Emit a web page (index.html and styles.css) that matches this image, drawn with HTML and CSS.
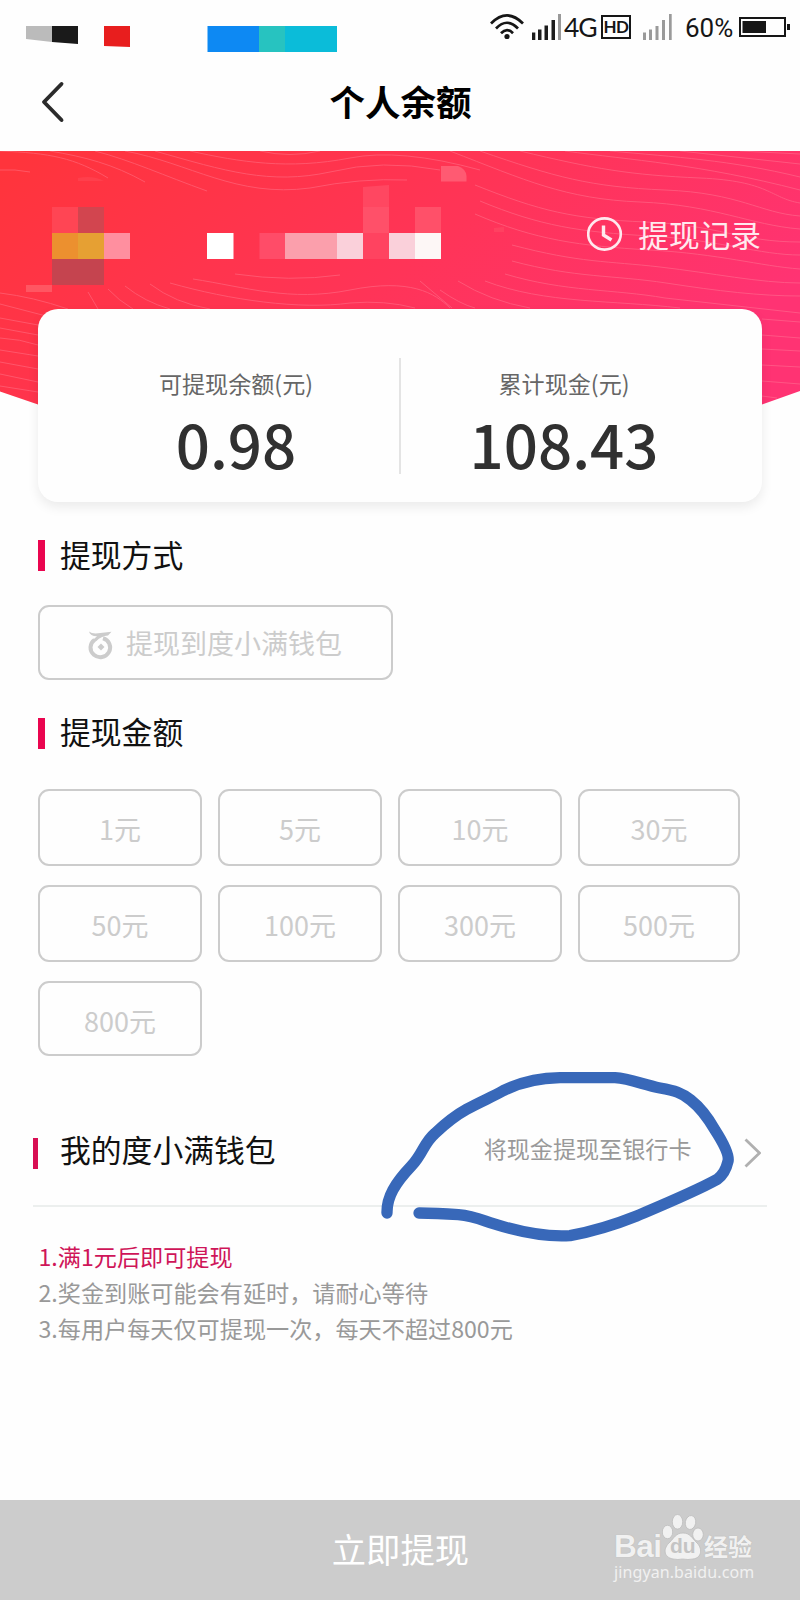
FILE: index.html
```html
<!DOCTYPE html>
<html lang="zh-CN">
<head>
<meta charset="utf-8">
<title>个人余额</title>
<link rel="stylesheet" href="styles.css">
</head>
<body>
<div class="page">
  <header class="status">
    <svg class="status-blocks" width="320" height="30" viewBox="0 0 320 30">
      <path d="M0 0h26v16L0 13z" fill="#bbb"/>
      <path d="M26 0h26v18l-26-2z" fill="#1a1a1a"/>
      <path d="M78 0h26v21l-26-1z" fill="#e81e1e"/>
      <path d="M181.500 0h52v26h-52z" fill="#0d89f3"/>
      <path d="M233 0h26.500v26H233z" fill="#27c3c0"/>
      <path d="M259 0h52v26h-52z" fill="#0bbcd9"/>
    </svg>
    <div class="status-right">
      <svg class="wifi" width="34" height="26" viewBox="0 0 34 26" fill="none" stroke="#161616" stroke-width="2.700">
        <path d="M1 9.500Q17-6.500 33 9.500M6 14.500Q17 3 28 14.500M11 19.200Q17 13 23 19.200"/>
        <circle cx="17" cy="22.500" r="2.600" fill="#161616" stroke="none"/>
      </svg>
      <svg class="signal" width="30" height="26" viewBox="0 0 30 26" fill="#1c1c1c">
        <path d="M0 18.500h3.300V26H0zM6 15.500h3.500V26H6zM12.500 11.500H16V26h-3.500zM19.500 6H23v20h-3.500z"/>
        <path d="M26 0h3v26h-3z" fill="#999"/>
      </svg>
      <span class="net">4G</span>
      <span class="hd">HD</span>
      <svg class="signal-two" width="30" height="26" viewBox="0 0 30 26" fill="#9a9a9a">
        <path d="M0 18.500h3V26H0zM6 15.500h3V26H6zM12.500 12h3v14h-3zM19 6h3v20h-3zM26 0h2.700v26H26z"/>
      </svg>
      <span class="percent">60%</span>
      <svg class="battery" width="52" height="20" viewBox="0 0 52 20">
        <path d="M1 1h45v18H1z" fill="none" stroke="#161616" stroke-width="2"/>
        <path d="M3.500 4H27v12H3.500zM48 7h3v6h-3z" fill="#161616"/>
      </svg>
    </div>
  </header>

  <nav class="nav">
    <svg class="back" width="24" height="42" viewBox="0 0 24 42" fill="none" stroke="#2b2b2b" stroke-width="3.900" stroke-linecap="round" stroke-linejoin="round"><path d="M20.500 3 3 21 20.500 39"/></svg>
    <h1 class="title">个人余额</h1>
  </nav>

  <section class="hero">
    <svg class="hero-art" width="800" height="254" viewBox="0 151 800 254">
      <defs>
        <linearGradient id="red" x1="0" y1="0.100" x2="1" y2="0.500">
          <stop offset="0" stop-color="#ff343c"/>
          <stop offset="0.550" stop-color="#ff3457"/>
          <stop offset="1" stop-color="#ff3373"/>
        </linearGradient>
      </defs>
      <path d="M0 151H800V391L762 404.500H38L0 391.500z" fill="url(#red)"/>
      <g fill="none" stroke="#ff8da2" stroke-width="1" opacity="0.380">
        <path d="M0 151C50 153 75 158 108 178M0 170Q15 169 30 172"/>
        <path d="M50 151C85 157 113 164 145 182M95 151C130 160 165 176 207 191"/>
        <path d="M125 151C190 163 236 198 310 188Q360 178 407 180M155 151C225 171 270 185 330 172Q382 159 440 170"/>
        <path d="M190 151C240 162 288 170 350 158Q400 148 480 170M260 151Q290 158 320 151"/>
        <path d="M235 274Q290 282 340 275M193 279C245 287 290 302 350 290S435 293 450 308"/>
        <path d="M170 283C230 300 300 310 350 303Q385 300 415 308M150 284Q175 303 210 309M125 286Q145 302 170 309M108 289Q118 300 133 309M88 292 98 309"/>
        <path d="M0 293Q33 297 68 309M0 304 50 317M0 318 38 325M0 328 38 335M0 338Q20 339 38 345M0 350 38 356M0 362 38 369M0 374 38 382M0 386 38 392"/>
        <path d="M450 151C525 180 565 199 640 202S750 225 800 229M480 151C555 177 590 187 665 190S760 213 800 216M520 151C595 169 630 175 700 178S770 198 800 203"/>
        <path d="M565 151C630 160 700 164 800 190M610 151C675 157 730 160 800 177M680 151 800 164M740 151 800 154"/>
        <path d="M475 185C540 211 573 219 646 222S740 242 800 242M480 201C540 226 580 232 650 236S760 255 800 255M475 214C535 240 580 246 650 250S760 266 800 269"/>
        <path d="M512 245C580 263 608 261 660 267S760 283 800 283M512 261C575 278 614 275 666 283S760 296 800 296M505 274C565 292 614 289 665 298L800 313"/>
        <path d="M485 281C545 304 614 300 680 308M458 281Q490 301 530 308M440 290Q460 304 475 308M420 281 452 308M762 319l38 3M762 335l38 3M762 349l38 2M762 365l38 2M762 381l38 3M762 396l15 2"/>
      </g>
      <path d="M52 207h26v26H52z" fill="#ff4554"/>
      <path d="M78 207h26v26H78z" fill="#d2454f"/>
      <path d="M52 233h26v26H52z" fill="#ec902f"/>
      <path d="M78 233h26v26H78z" fill="#e6a033"/>
      <path d="M104 233h26v26h-26z" fill="#ff8f9f"/>
      <path d="M52 259h52v26H52z" fill="#c5444f"/>
      <path d="M26 285h26v7H26z" fill="#ff5662"/>
      <path d="M78 178q15-3 26 3H78z" fill="#ff3f4c"/>
      <path d="M207 233h26.500v26H207z" fill="#fff"/>
      <path d="M259.500 233H285v26h-25.500z" fill="#ff4c68"/>
      <path d="M285 233h52v26h-52z" fill="#fb9fac"/>
      <path d="M337 233h26v26h-26zM389 233h26v26h-26z" fill="#fad0da"/>
      <path d="M363 187l26-2v22h-26z" fill="#ff4761"/>
      <path d="M363 207h26v26h-26zM415 207h26v26h-26z" fill="#ff5069"/>
      <path d="M363 233h26v26h-26z" fill="#ff4360"/>
      <path d="M415 233h26v26h-26z" fill="#fdf7f6"/>
      <path d="M441 166h17q8 3 8.500 10v5.500H441z" fill="#ff5a72"/>
      <path d="M494 228l10-1v5h-10z" fill="#ff4161"/>
    </svg>
    <a class="records">
      <svg width="36" height="34" viewBox="0 0 36 34" fill="none" stroke="#ffe9ee" stroke-width="2.600"><ellipse cx="17.500" cy="17" rx="16.300" ry="15.600"/><path d="M16.500 8.500v9.500l8 5" stroke-width="3.400"/></svg>
      <span class="records-text">提现记录</span>
    </a>
    <div class="card">
      <div class="stat">
        <span class="stat-label">可提现余额(元)</span>
        <span class="stat-value">0.98</span>
      </div>
      <div class="divider"></div>
      <div class="stat">
        <span class="stat-label">累计现金(元)</span>
        <span class="stat-value">108.43</span>
      </div>
    </div>
  </section>

  <main class="content">
    <h2 class="heading heading-method">提现方式</h2>
    <div class="method">
      <svg width="26" height="30" viewBox="0 0 26 30" fill="none" stroke="#ccc">
        <path d="M1 1.500Q4 4 10 3.300L23.500 1.800 20 5.500Q13 6 8.500 11L3.500 13Q5 9 9 6.300Q2 6 1 1.500z" fill="#ccc" stroke="none"/>
        <path d="M6.500 9.800A9.800 9.600 0 1 0 15 8.300" stroke-width="4"/>
        <path d="M13 13.500 16.500 17 13 20.500 9.500 17z" fill="#ccc" stroke="none"/>
      </svg>
      <span class="method-text">提现到度小满钱包</span>
    </div>
    <h2 class="heading heading-amount">提现金额</h2>
    <div class="amounts">
      <div class="amount">1元</div>
      <div class="amount">5元</div>
      <div class="amount">10元</div>
      <div class="amount">30元</div>
      <div class="amount">50元</div>
      <div class="amount">100元</div>
      <div class="amount">300元</div>
      <div class="amount">500元</div>
      <div class="amount">800元</div>
    </div>
    <div class="wallet">
      <h2 class="wallet-title">我的度小满钱包</h2>
      <span class="wallet-link">将现金提现至银行卡</span>
      <svg class="chevron" width="17" height="30" viewBox="0 0 17 30" fill="none" stroke="#b0b0b0" stroke-width="2.800"><path d="M1.500 1.500 15.500 15 1.500 28.500"/></svg>
      <svg class="scribble" width="430" height="210" viewBox="0 0 1290 630" fill="none" stroke="#3868b9" stroke-width="34" stroke-linecap="round" stroke-linejoin="round">
        <path d="M51 489C50 440 75 400 125 347C160 310 160 280 195 250C225 222 250 200 290 178C330 155 365 142 400 122C450 97 515 84 570 83H735C780 86 820 104 870 114C915 122 935 128 962 150C990 172 1015 205 1035 240Q1080 310 1074 334Q1066 370 1042 388C975 425 890 460 800 498C735 524 665 545 600 557C520 562 430 540 370 521C330 508 310 498 265 494Q200 490 147 489"/>
      </svg>
    </div>
    <ol class="notes">
      <li class="note note-hot">1.满1元后即可提现</li>
      <li class="note">2.奖金到账可能会有延时，请耐心等待</li>
      <li class="note">3.每用户每天仅可提现一次，每天不超过800元</li>
    </ol>
  </main>

  <footer class="submit">
    <span class="submit-text">立即提现</span>
    <div class="mark">
      <div class="mark-row">
        <span class="mark-bai">Bai</span>
        <span class="mark-paw">
          <svg width="42" height="48" viewBox="0 0 42 48" fill="#f1f1f1" stroke="#bcbcbc" stroke-width="0.800">
            <ellipse cx="5.500" cy="18" rx="5.200" ry="6.700"/>
            <ellipse cx="15.500" cy="7.800" rx="5.200" ry="7.300"/>
            <ellipse cx="28.500" cy="8.500" rx="5.200" ry="7" transform="rotate(10 28.500 8.500)"/>
            <ellipse cx="36" cy="20.500" rx="5.300" ry="6.500"/>
            <path d="M21 19C28 19 30 24 34 28C41 34 40 44 31 45Q26 46 20.500 45Q16 46 11 45C1 43 1 34 8 28C12 24 14 19 21 19z"/>
          </svg>
          <span class="mark-du">du</span>
        </span>
        <span class="mark-cn">经验</span>
      </div>
      <span class="mark-url">jingyan.baidu.com</span>
    </div>
  </footer>
</div>
</body>
</html>
```

FILE: styles.css
```css
* {
  box-sizing: border-box;
}

body {
  margin: 0;
  background: #fefefe;
  font-family: "Noto Sans CJK SC", "Noto Sans", sans-serif;
  color: #111;
}

.page {
  display: flex;
  flex-direction: column;
  width: 800px;
  height: 1600px;
  overflow: hidden;
}

svg {
  display: block;
  flex: none;
}

h1,
h2,
ol {
  margin: 0;
  padding: 0;
  font-weight: 400;
}

.status {
  display: flex;
  justify-content: space-between;
  height: 56px;
  padding: 0 9px 0 26px;
}

.status-blocks {
  margin-top: 26px;
}

.status-right {
  display: flex;
  align-items: center;
  height: 53px;
  color: #161616;
}

.signal {
  margin-left: 8px;
}

.net {
  width: 34px;
  margin-left: 2px;
  font: 26.5px/30px Lato, sans-serif;
  letter-spacing: -1px;
  white-space: nowrap;
}

.hd {
  width: 30px;
  height: 24px;
  margin-left: 3px;
  border: 2.5px solid #161616;
  font: 700 17px/20px Lato, sans-serif;
  letter-spacing: -0.5px;
  text-align: center;
}

.signal-two {
  margin-left: 12px;
}

.percent {
  width: 50px;
  margin-left: 12px;
  font: 26px/30px Roboto, sans-serif;
  padding-top: 3px;
}

.battery {
  margin-left: 4px;
}

.nav {
  display: flex;
  align-items: center;
  height: 95px;
  padding: 0 41px;
}

.back {
  margin-top: -3px;
}

.title {
  flex: 1;
  margin: 0 23px 5px 0;
  font-size: 35.5px;
  font-weight: 700;
  line-height: 46px;
  text-align: center;
  color: #000;
}

.hero {
  position: relative;
  height: 351px;
  padding: 0 38px;
}

.hero-art {
  position: absolute;
  top: 0;
  left: 0;
}

.records {
  position: relative;
  display: flex;
  justify-content: flex-end;
  align-items: center;
  gap: 15px;
  height: 158px;
  padding: 8px 1px 0 0;
}

.records-text {
  font-size: 30.7px;
  line-height: 40px;
  color: #ffe9ee;
}

.card {
  position: relative;
  display: flex;
  height: 193px;
  padding: 49px 35px 0;
  border-radius: 20px;
  background: #fefefe;
  box-shadow: 0 5px 12px rgba(0, 0, 0, 0.08);
}

.stat {
  display: flex;
  flex: 1;
  flex-direction: column;
  align-items: center;
}

.stat-label {
  padding-top: 8px;
  font-size: 23.1px;
  line-height: 34px;
  color: #666;
}

.stat-value {
  margin-top: 8px;
  font-size: 60px;
  font-weight: 500;
  line-height: 70px;
  color: #303030;
}

.divider {
  width: 2px;
  height: 116px;
  background: #e4e4e4;
}

.content {
  flex: 1;
  padding: 0 33px;
}

.heading {
  height: 31px;
  margin-left: 5px;
  padding-left: 15px;
  border-left: 7px solid #ea054f;
  font-size: 30.8px;
  line-height: 28px;
}

.heading-method {
  margin-top: 38px;
}

.method {
  display: flex;
  align-items: center;
  gap: 12px;
  width: 355px;
  height: 75px;
  margin: 34px 0 0 5px;
  padding-left: 48px;
  border: 2px solid #ccc;
  border-radius: 11px;
}

.method svg {
  margin-top: 5px;
}

.method-text {
  font-size: 27px;
  line-height: 40px;
  color: #ccc;
}

.heading-amount {
  margin-top: 38px;
  line-height: 26px;
}

.amounts {
  display: grid;
  grid-template: 77px 77px 75px / 164px 164px 164px 162px;
  gap: 19px 16px;
  margin: 40px 0 0 5px;
}

.amount {
  border: 2px solid #ccc;
  border-radius: 11px;
  font-size: 27px;
  line-height: 76px;
  text-align: center;
  color: #ccc;
}

.wallet {
  position: relative;
  display: flex;
  height: 151px;
  padding: 82px 6px 0 0;
  border-bottom: 2px solid #ecefee;
}

.wallet-title {
  flex: 1;
  height: 31px;
  padding-left: 22px;
  border-left: 5px solid #d80f54;
  font-size: 30.8px;
  line-height: 22px;
}

.wallet-link {
  margin-right: 52.5px;
  font-size: 23.1px;
  line-height: 20px;
  color: #999;
}

/* Hand-drawn ring laid over the wallet row. */
.scribble {
  position: absolute;
  top: -6px;
  left: 337px;
}

.notes {
  padding: 31px 0 0 5.5px;
  list-style: none;
}

.note {
  font-size: 23.15px;
  line-height: 36px;
  color: #999;
}

.note-hot {
  color: #cf1559;
}

.submit {
  display: flex;
  justify-content: flex-end;
  height: 100px;
  padding-right: 43px;
  background: #ccc;
}

.submit-text {
  margin-right: 145px;
  font-size: 34.3px;
  line-height: 96px;
  color: #fff;
}

.mark {
  width: 143px;
  height: 90px;
  padding-top: 14px;
  color: #f1f1f1;
}

.mark-row {
  display: flex;
  height: 48px;
}

.mark-bai {
  width: 48px;
  padding-top: 19px;
  font: 700 31.5px/26px "Liberation Sans", sans-serif;
  letter-spacing: -0.5px;
  text-shadow: 0 0 1px #aaa;
}

.mark-paw {
  position: relative;
}

.mark-du {
  position: absolute;
  top: 20px;
  left: 8px;
  font: 700 21px/24px "Liberation Sans", sans-serif;
  color: #c4c4c4;
}

.mark-cn {
  padding-top: 19px;
  font-size: 24px;
  font-weight: 700;
  line-height: 26px;
  text-shadow: 0 0 1px #aaa;
}

.mark-url {
  display: block;
  font: 16px/20px "Noto Sans", sans-serif;
  letter-spacing: 0.1px;
  white-space: nowrap;
}
```
